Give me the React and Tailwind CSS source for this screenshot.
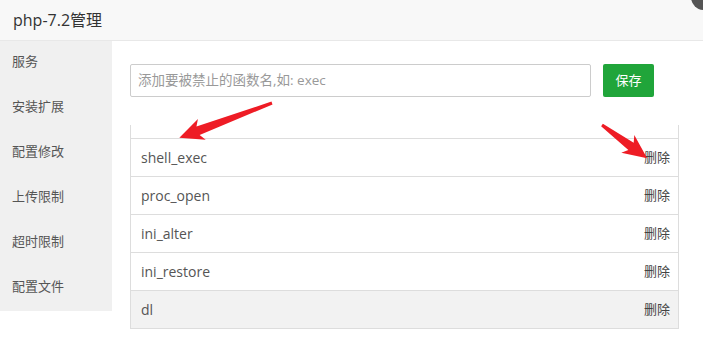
import React from 'react';

const menu = ['服务', '安装扩展', '配置修改', '上传限制', '超时限制', '配置文件'];
const funcs = ['shell_exec', 'proc_open', 'ini_alter', 'ini_restore', 'dl'];

// red annotation arrow, drawn along +x then rotated
const Arrow = ({ x, y, len, angle }) => (
  <polygon
    transform={`translate(${x} ${y}) rotate(${angle})`}
    points={`0,-1.5 ${len - 20},-4.5 ${len - 24},-11 ${len},0 ${len - 24},11 ${len - 20},4.5 0,1.5`}
    fill="#ee1c25"
  />
);

export default function App() {
  return (
    <div className="relative w-[703px] h-[338px] overflow-hidden bg-white font-['Open_Sans','Noto_Sans_CJK_SC',sans-serif]">
      <div className="h-[41px] bg-[#f8f8f8] border-b border-[#e8e8e8] flex items-center pl-[13px] text-[16px] text-[#333]">
        php-7.2管理
      </div>
      <div className="absolute -right-[14px] -top-[16px] w-[26px] h-[26px] rounded-full bg-[#555]" />

      <div className="flex">
        <div className="w-[112px] h-[270px] bg-[#f0f0f0] flex flex-col">
          {menu.map((m) => (
            <div key={m} className="h-[45px] flex items-center pl-[12px] pb-[3px] text-[13px] text-[#555]">
              {m}
            </div>
          ))}
        </div>

        <div className="flex-1 pl-[18px] pt-[23px]">
          <div className="flex gap-[12px]">
            <div className="w-[461px] h-[33px] border border-[#ccc] rounded-[2px] flex items-center pl-[7px] text-[13.5px] text-[#999]">
              添加要被禁止的函数名,如: exec
            </div>
            <button className="w-[51px] h-[33px] bg-[#20a53a] rounded-[2px] text-white text-[13px]">
              保存
            </button>
          </div>

          <div className="mt-[28px] w-[549px] border-x border-[#ddd]">
            <div className="h-[14px] border-b border-[#ddd]" />
            {funcs.map((f, i) => (
              <div
                key={f}
                className={`h-[38px] border-b border-[#ddd] flex items-center justify-between pl-[10px] pr-[8px] ${
                  i === funcs.length - 1 ? 'bg-[#f2f2f2]' : 'bg-white'
                }`}
              >
                <span className="text-[14px] text-[#555]">{f}</span>
                <span className="text-[13px] text-[#444]">删除</span>
              </div>
            ))}
          </div>
        </div>
      </div>

      <svg className="absolute inset-0 pointer-events-none" width="703" height="338">
        <Arrow x={272} y={103} len={99} angle={159.4} />
        <Arrow x={602} y={125} len={56} angle={36.3} />
      </svg>
    </div>
  );
}
